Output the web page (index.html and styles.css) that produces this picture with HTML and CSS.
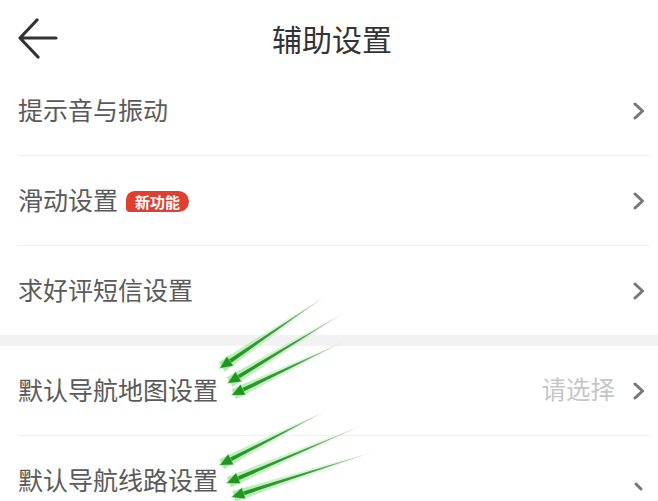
FILE: index.html
```html
<!DOCTYPE html>
<html lang="zh">
<head>
<meta charset="utf-8">
<link rel="stylesheet" href="styles.css">
</head>
<body>
<div class="page">
  <header class="header">
    <svg class="back" width="40" height="42" viewBox="0 0 40 42">
      <path d="M38 20 H3 M19 2 L2 20 L20 39" fill="none" stroke="#333" stroke-width="3.2" stroke-linecap="round" stroke-linejoin="round"/>
    </svg>
    <h1 class="title">辅助设置</h1>
  </header>

  <div class="row"><div class="row-in">
    <span class="label">提示音与振动</span>
    <svg class="chev" width="14" height="18" viewBox="0 0 14 18"><path d="M3 2 L10.5 9 L3 16" fill="none" stroke="#777" stroke-width="3" stroke-linecap="round" stroke-linejoin="round"/></svg>
  </div></div>

  <div class="row"><div class="row-in">
    <span class="label">滑动设置</span><span class="badge">新功能</span>
    <svg class="chev" width="14" height="18" viewBox="0 0 14 18"><path d="M3 2 L10.5 9 L3 16" fill="none" stroke="#777" stroke-width="3" stroke-linecap="round" stroke-linejoin="round"/></svg>
  </div></div>

  <div class="row"><div class="row-in last">
    <span class="label">求好评短信设置</span>
    <svg class="chev" width="14" height="18" viewBox="0 0 14 18"><path d="M3 2 L10.5 9 L3 16" fill="none" stroke="#777" stroke-width="3" stroke-linecap="round" stroke-linejoin="round"/></svg>
  </div></div>

  <div class="band"></div>

  <div class="row"><div class="row-in">
    <span class="label">默认导航地图设置</span>
    <span class="value">请选择</span>
    <svg class="chev" width="14" height="18" viewBox="0 0 14 18"><path d="M3 2 L10.5 9 L3 16" fill="none" stroke="#777" stroke-width="3" stroke-linecap="round" stroke-linejoin="round"/></svg>
  </div></div>

  <div class="row"><div class="row-in">
    <span class="label">默认导航线路设置</span>
    <svg class="chev stub" width="14" height="18" viewBox="0 0 14 18"><path d="M4 3 L9 8" fill="none" stroke="#777" stroke-width="3" stroke-linecap="round"/></svg>
  </div></div>

  <svg class="annot" width="658" height="501" viewBox="0 0 658 501">
    <defs>
      <linearGradient id="shaft" x1="0" y1="0" x2="1" y2="0">
        <stop offset="0" stop-color="#1f961f"/>
        <stop offset="0.55" stop-color="#3c9e3c"/>
        <stop offset="1" stop-color="#9a9a9a" stop-opacity="0.35"/>
      </linearGradient>
      <linearGradient id="glow" x1="0" y1="0" x2="1" y2="0">
        <stop offset="0" stop-color="#7ed87e" stop-opacity="0.6"/>
        <stop offset="0.7" stop-color="#a8e6a8" stop-opacity="0.3"/>
        <stop offset="1" stop-color="#ffffff" stop-opacity="0"/>
      </linearGradient>
      <g id="arrowBase">
        <polygon points="-2,0 13,-6.5 13,6.5" fill="#8fdc8f" fill-opacity="0.5"/>
        <polygon points="0,0 12,-5.5 12,5.5" fill="#1f961f"/>
      </g>
    </defs>
    <g transform="translate(220 368) rotate(-34.3)">
      <polygon points="2,-5.5 129,-1 129,1 2,5.5" fill="url(#glow)"/>
      <polygon points="8,-2 129,0 8,2" fill="url(#shaft)"/>
      <use href="#arrowBase"/>
    </g>
    <g transform="translate(228 383) rotate(-31.25)">
      <polygon points="2,-5.5 137,-1 137,1 2,5.5" fill="url(#glow)"/>
      <polygon points="8,-2 137,0 8,2" fill="url(#shaft)"/>
      <use href="#arrowBase"/>
    </g>
    <g transform="translate(232 395) rotate(-25.5)">
      <polygon points="2,-5.5 123,-1 123,1 2,5.5" fill="url(#glow)"/>
      <polygon points="8,-2 123,0 8,2" fill="url(#shaft)"/>
      <use href="#arrowBase"/>
    </g>
    <g transform="translate(220 465) rotate(-27.2)">
      <polygon points="2,-5.5 120,-1 120,1 2,5.5" fill="url(#glow)"/>
      <polygon points="8,-2 120,0 8,2" fill="url(#shaft)"/>
      <use href="#arrowBase"/>
    </g>
    <g transform="translate(227 483) rotate(-23.1)">
      <polygon points="2,-5.5 148,-1 148,1 2,5.5" fill="url(#glow)"/>
      <polygon points="8,-2 148,0 8,2" fill="url(#shaft)"/>
      <use href="#arrowBase"/>
    </g>
    <g transform="translate(232 497) rotate(-17.7)">
      <polygon points="2,-5.5 148,-1 148,1 2,5.5" fill="url(#glow)"/>
      <polygon points="8,-2 148,0 8,2" fill="url(#shaft)"/>
      <use href="#arrowBase"/>
    </g>
  </svg>
</div>
</body>
</html>
```

FILE: styles.css
```css
html, body {
  margin: 0;
  padding: 0;
  background: #ffffff;
}
body {
  font-family: "Noto Sans CJK SC", "Noto Sans", sans-serif;
  overflow: hidden;
}
.page {
  position: relative;
  width: 658px;
  height: 501px;
  overflow: hidden;
}
.header {
  position: relative;
  height: 66px;
  display: flex;
  justify-content: center;
  align-items: flex-start;
  padding-top: 17px;
  box-sizing: border-box;
}
.back {
  position: absolute;
  left: 18px;
  top: 18px;
}
.title {
  margin: 0;
  font-size: 30px;
  font-weight: 400;
  line-height: 42px;
  color: #333333;
  padding-left: 6px;
}
.row {
  height: 90px;
}
.row-in {
  height: 89px;
  margin: 0 8px 0 18px;
  padding-right: 4px;
  border-bottom: 1px solid #f0f0f0;
  display: flex;
  align-items: center;
}
.row-in.last {
  border-bottom-color: #ffffff;
}
.label {
  font-size: 25px;
  line-height: 30px;
  margin-bottom: 4px;
  color: #5a5a5a;
}
.badge {
  margin-left: 8px;
  margin-top: 1px;
  width: 63px;
  height: 21px;
  border-radius: 9px 11px 11px 4px;
  background: #df3f2e;
  color: #ffffff;
  font-size: 15px;
  font-weight: 700;
  line-height: 21px;
  text-align: center;
}
.value {
  margin-left: auto;
  margin-right: 17px;
  margin-bottom: 4px;
  font-size: 24.5px;
  line-height: 30px;
  color: #c6c6c6;
}
.chev {
  margin-left: auto;
  flex-shrink: 0;
}
.value + .chev {
  margin-left: 0;
}
.chev.stub {
  margin-top: 18px;
}
.band {
  height: 11px;
  margin-top: -1px;
  background: #f2f2f2;
}
.annot {
  position: absolute;
  left: 0;
  top: 0;
  pointer-events: none;
}
```
